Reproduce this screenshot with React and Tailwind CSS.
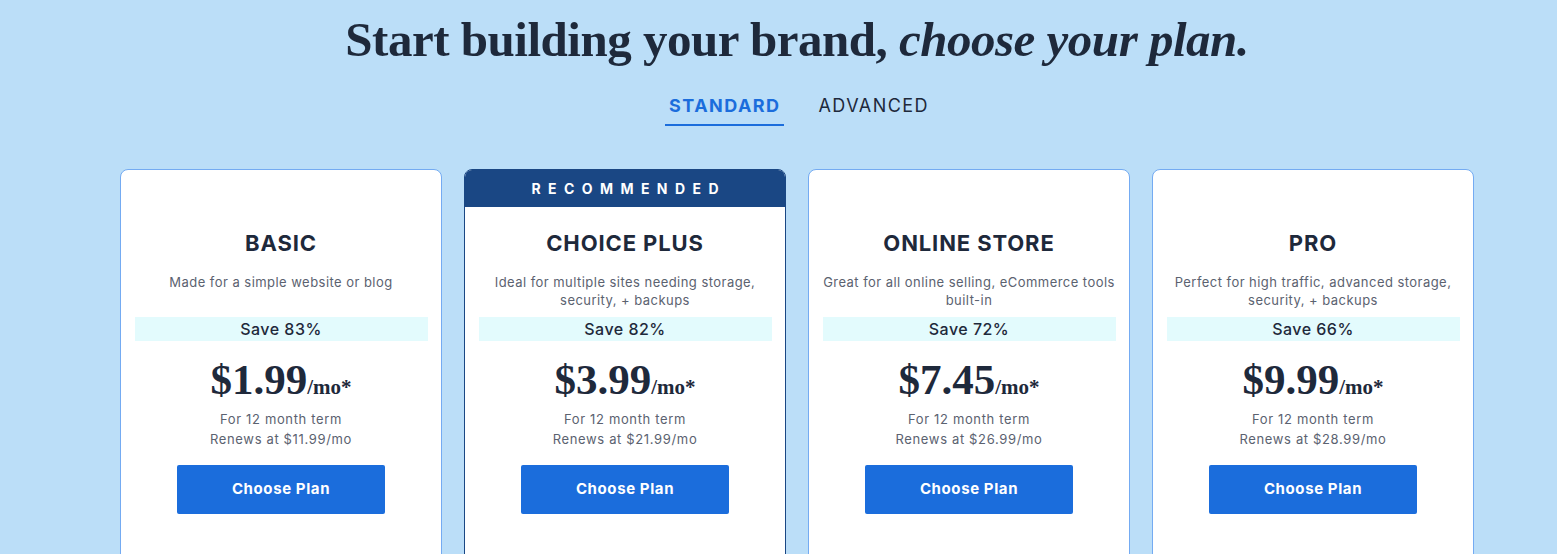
import React from "react";

const plans = [
  { name: "BASIC", desc: ["Made for a simple website or blog"], save: "Save 83%", price: "$1.99", renew: "Renews at $11.99/mo" },
  { name: "CHOICE PLUS", desc: ["Ideal for multiple sites needing storage,", "security, + backups"], save: "Save 82%", price: "$3.99", renew: "Renews at $21.99/mo", rec: true },
  { name: "ONLINE STORE", desc: ["Great for all online selling, eCommerce tools", "built-in"], save: "Save 72%", price: "$7.45", renew: "Renews at $26.99/mo" },
  { name: "PRO", desc: ["Perfect for high traffic, advanced storage,", "security, + backups"], save: "Save 66%", price: "$9.99", renew: "Renews at $28.99/mo" },
];

const sans = "font-['Inter','Open_Sans',sans-serif]";
const serif = "font-['Liberation_Serif','Times_New_Roman',serif]";

function Card({ p }) {
  return (
    <div
      className={`w-[322px] h-[400px] bg-white rounded-t-[8px] border flex flex-col items-center overflow-hidden ${
        p.rec ? "border-[#1a4784]" : "border-[#74abf2]"
      }`}
    >
      {p.rec ? (
        <div className={`w-full h-[37px] bg-[#1a4784] flex items-center justify-center text-white text-[14px] font-bold tracking-[0.53em] pl-[0.53em] ${sans}`}>
          RECOMMENDED
        </div>
      ) : (
        <div className="h-[37px]" />
      )}
      <div className={`mt-[22px] text-[22px] leading-[28px] font-bold tracking-[0.04em] text-[#1e293b] ${sans}`}>{p.name}</div>
      <div className={`mt-[16px] h-[42px] text-[13px] leading-[18px] tracking-[0.035em] text-[#5b6270] text-center ${sans}`}>
        {p.desc.map((d, i) => (
          <div key={i}>{d}</div>
        ))}
      </div>
      <div className={`mt-[2px] w-[293px] h-[24px] bg-[#e3fbfd] flex items-center justify-center text-[16px] font-medium tracking-[0.03em] text-[#1e293b] ${sans}`}>
        {p.save}
      </div>
      <div className={`mt-[17px] flex items-baseline text-[#1e293b] font-bold ${serif}`}>
        <span className="text-[43px] leading-[44px]">{p.price}</span>
        <span className="text-[21px]">/mo*</span>
      </div>
      <div className={`mt-[5px] text-[13px] leading-[20px] tracking-[0.05em] text-[#5b6270] text-center ${sans}`}>
        <div>For 12 month term</div>
        <div>{p.renew}</div>
      </div>
      <button className={`mt-[16px] w-[208px] h-[49px] rounded-[2px] bg-[#1b6ddc] text-white text-[15px] font-bold tracking-[0.04em] ${sans}`}>
        Choose Plan
      </button>
    </div>
  );
}

export default function App() {
  return (
    <div className="w-full h-[554px] bg-[#bbdef8] overflow-hidden">
      <div className="w-[1594px] flex flex-col items-center">
        <h1 className={`mt-[12px] text-[49px] leading-[56px] font-bold text-[#1e293b] tracking-[-0.01em] ${serif}`}>
          Start building your brand, <span className="italic">choose your plan.</span>
        </h1>
        <div className={`mt-[24px] flex gap-[34px] text-[18px] tracking-[0.08em] ${sans}`}>
          <div className="flex flex-col items-center">
            <div className="text-[#1b6ddc] font-bold px-[4px] leading-[28px]">STANDARD</div>
            <div className="mt-[4px] h-[2px] w-full bg-[#1b6ddc]" />
          </div>
          <div className="text-[#1e293b] leading-[28px]">ADVANCED</div>
        </div>
        <div className="mt-[43px] flex gap-[22px]">
          {plans.map((p) => (
            <Card key={p.name} p={p} />
          ))}
        </div>
      </div>
    </div>
  );
}
